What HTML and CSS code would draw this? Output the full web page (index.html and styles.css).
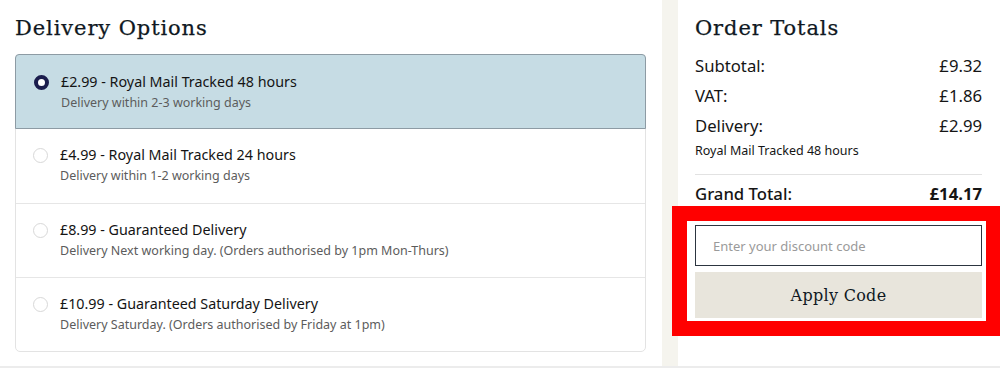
FILE: index.html
```html
<!DOCTYPE html>
<html lang="en">
<head>
<meta charset="utf-8">
<title>Checkout</title>
<link rel="stylesheet" href="styles.css">
</head>
<body>
<div class="page">
  <section class="left">
    <h2 class="heading">Delivery Options</h2>
    <div class="options">
      <label class="option selected">
        <span class="radio"></span>
        <span class="text">
          <span class="title">£2.99 - Royal Mail Tracked 48 hours</span>
          <span class="sub">Delivery within 2-3 working days</span>
        </span>
      </label>
      <label class="option">
        <span class="radio"></span>
        <span class="text">
          <span class="title">£4.99 - Royal Mail Tracked 24 hours</span>
          <span class="sub">Delivery within 1-2 working days</span>
        </span>
      </label>
      <label class="option">
        <span class="radio"></span>
        <span class="text">
          <span class="title">£8.99 - Guaranteed Delivery</span>
          <span class="sub">Delivery Next working day. (Orders authorised by 1pm Mon-Thurs)</span>
        </span>
      </label>
      <label class="option">
        <span class="radio"></span>
        <span class="text">
          <span class="title">£10.99 - Guaranteed Saturday Delivery</span>
          <span class="sub">Delivery Saturday. (Orders authorised by Friday at 1pm)</span>
        </span>
      </label>
    </div>
  </section>
  <div class="strip"></div>
  <section class="right">
    <h2 class="heading">Order Totals</h2>
    <div class="row"><span>Subtotal:</span><span>£9.32</span></div>
    <div class="row"><span>VAT:</span><span>£1.86</span></div>
    <div class="row"><span>Delivery:</span><span>£2.99</span></div>
    <div class="method">Royal Mail Tracked 48 hours</div>
    <div class="divider"></div>
    <div class="row grand"><span class="label">Grand Total:</span><span class="amount">£14.17</span></div>
    <div class="discount">
      <input class="code" type="text" placeholder="Enter your discount code">
      <button class="apply" type="button">Apply Code</button>
    </div>
  </section>
  <div class="highlight"></div>
</div>
</body>
</html>
```

FILE: styles.css
```css
* { box-sizing: border-box; }
html, body { margin: 0; padding: 0; background: #fff; }
body {
  font-family: "Noto Sans", "Open Sans", sans-serif;
  color: #1c1c1c;
}
.page {
  position: relative;
  display: flex;
  width: 1000px;
  height: 368px;
  border-bottom: 2px solid #ececec;
}
.left {
  width: 662px;
  padding: 0 16px 0 15px;
}
.strip {
  width: 16px;
  background: #f5f4ee;
}
.right {
  flex: 1;
  padding: 0 18px 0 17px;
}
.heading {
  margin: 0;
  padding-top: 14px;
  height: 54px;
  font-family: "DejaVu Serif", "Liberation Serif", serif;
  font-weight: normal;
  font-size: 21px;
  line-height: 28px;
  color: #0f1822;
  letter-spacing: 0.9px;
  -webkit-text-stroke: 0.25px #0f1822;
}
.right .heading { height: 51px; }
.options {
  border: 1px solid #e3e3e3;
  border-radius: 5px;
}
.option {
  display: flex;
  align-items: flex-start;
  height: 74px;
  padding: 16px 10px 0 17px;
  border-top: 1px solid #e6e6e6;
}
.option:first-child { border-top: none; }
.option.selected {
  margin: -1px -1px 0 -1px;
  height: 75px;
  padding: 17px 11px 0 18px;
  background: #c6dce4;
  border: 1px solid #8d9ba4;
  border-radius: 4px 4px 0 0;
}
.option.selected + .option { border-top: none; }
.radio {
  flex: none;
  width: 15px;
  height: 15px;
  margin-top: 3px;
  margin-right: 12px;
  border: 1px solid #d8d8d8;
  border-radius: 50%;
  background: #fff;
}
.selected .radio {
  border: 4px solid #1b1d4d;
  background: #fff;
}
.text { display: flex; flex-direction: column; }
.title {
  font-size: 14.3px;
  line-height: 20px;
  color: #141414;
}
.sub {
  margin-top: 2px;
  font-size: 12.5px;
  line-height: 18px;
  color: #5c5c5c;
}
.row {
  display: flex;
  justify-content: space-between;
  height: 30px;
  line-height: 30px;
  font-size: 16.7px;
  color: #151515;
}
.method {
  height: 20px;
  line-height: 20px;
  font-size: 12.5px;
  color: #151515;
}
.divider {
  margin-top: 13px;
  height: 1px;
  background: #e2e2e2;
}
.row.grand { margin-top: 4px; }
.row.grand .label { font-weight: 500; }
.row.grand .amount { font-weight: 700; }
.discount {
  margin-top: 16px;
  display: flex;
  flex-direction: column;
  gap: 6px;
}
.code {
  height: 41px;
  padding: 0 17px;
  border: 1px solid #2c3540;
  font-family: "Noto Sans", "Open Sans", sans-serif;
  font-size: 13px;
  color: #333;
  background: #fff;
  outline: none;
}
.code::placeholder { color: #9a9a9a; }
.apply {
  height: 46px;
  border: none;
  background: #e8e5dc;
  font-family: "DejaVu Serif", "Liberation Serif", serif;
  font-size: 16px;
  letter-spacing: 0.3px;
  color: #0f1822;
  cursor: pointer;
}
.highlight {
  position: absolute;
  left: 672px;
  top: 206px;
  width: 329px;
  height: 130px;
  border: 15px solid #ff0000;
  pointer-events: none;
}
```
